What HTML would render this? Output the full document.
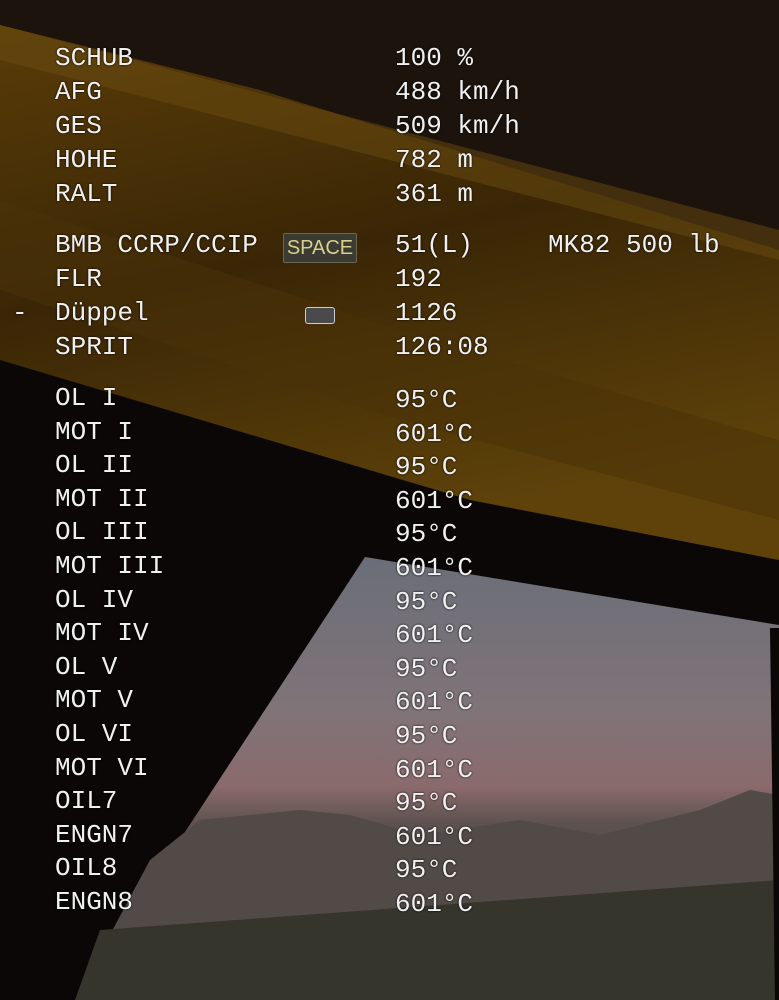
<!DOCTYPE html>
<html><head><meta charset="utf-8"><style>
html,body{margin:0;padding:0;width:779px;height:1000px;overflow:hidden;background:#0b0806}
svg{position:absolute;left:0;top:0}
.t{position:absolute;font-family:"Liberation Mono",monospace;font-size:26px;color:#f0f0f0;line-height:34px;white-space:pre;text-shadow:0 0 2px #000}
.key{position:absolute;left:283px;top:233px;width:72px;height:28px;background:#3b3a33;border:1px solid #6a6650;border-radius:2px;color:#d9cf8a;font-family:"Liberation Sans",sans-serif;font-size:20px;line-height:28px;text-align:center}
.box{position:absolute;left:305px;top:307px;width:28px;height:15px;background:#4a4a4c;border:1px solid #ccc;border-radius:3px}
</style></head><body>
<svg width="779" height="1000" viewBox="0 0 779 1000">
<defs>
<linearGradient id="gold" x1="0" y1="0" x2="0.3" y2="1">
<stop offset="0" stop-color="#5a3c08"/><stop offset="0.5" stop-color="#3a2606"/><stop offset="1" stop-color="#5e420a"/></linearGradient>
<linearGradient id="sky" x1="0" y1="0" x2="0" y2="1">
<stop offset="0" stop-color="#6a6e78"/><stop offset="0.35" stop-color="#807478"/><stop offset="0.52" stop-color="#8a6a6c"/><stop offset="0.6" stop-color="#5e5250"/><stop offset="0.8" stop-color="#42403a"/><stop offset="1" stop-color="#302e28"/></linearGradient>
</defs>
<rect width="779" height="1000" fill="#0a0706"/>
<polygon points="0,0 779,0 779,560 0,360" fill="#1c130c"/>
<polygon points="0,25 260,90 779,250 779,560 470,500 0,360" fill="url(#gold)"/>
<polygon points="0,200 400,330 779,440 779,520 400,420 0,290" fill="#4a3208" opacity="0.5"/>
<polygon points="0,25 779,230 779,260 0,60" fill="#6a4c10" opacity="0.5"/>
<polygon points="365,557 779,625 779,1000 75,1000" fill="url(#sky)"/>
<polygon points="200,820 300,810 350,815 420,835 520,820 600,835 700,810 750,790 779,795 779,1000 75,1000 150,860" fill="#524a46"/>
<polygon points="100,930 779,880 779,1000 75,1000" fill="#35352c"/>
<polygon points="770,628 779,628 779,1000 775,1000" fill="#0a0706"/>
</svg>
<div class="t" style="left:55px;top:41px">SCHUB
AFG
GES
HOHE
RALT</div>
<div class="t" style="left:395px;top:41px">100 %
488 km/h
509 km/h
782 m
361 m</div>
<div class="t" style="left:55px;top:228px">BMB CCRP/CCIP
FLR
Düppel
SPRIT</div>
<div class="t" style="left:12px;top:296px">-</div>
<div class="key">SPACE</div>
<div class="box"></div>
<div class="t" style="left:395px;top:228px">51(L)
192
1126
126:08</div>
<div class="t" style="left:548px;top:228px">MK82 500 lb</div>
<div class="t" style="left:55px;top:382px;line-height:33.6px">OL I
MOT I
OL II
MOT II
OL III
MOT III
OL IV
MOT IV
OL V
MOT V
OL VI
MOT VI
OIL7
ENGN7
OIL8
ENGN8</div>
<div class="t" style="left:395px;top:384px;line-height:33.6px">95°C
601°C
95°C
601°C
95°C
601°C
95°C
601°C
95°C
601°C
95°C
601°C
95°C
601°C
95°C
601°C</div>
</body></html>
